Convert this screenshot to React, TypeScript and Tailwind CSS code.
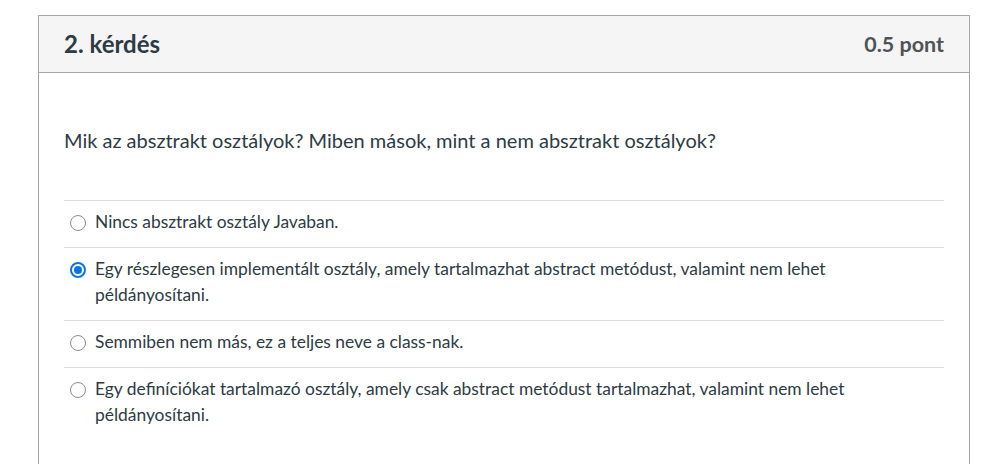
import React from "react";

const answers = [
  { text: "Nincs absztrakt osztály Javaban.", checked: false },
  {
    text: "Egy részlegesen implementált osztály, amely tartalmazhat abstract metódust, valamint nem lehet példányosítani.",
    checked: true,
  },
  { text: "Semmiben nem más, ez a teljes neve a class-nak.", checked: false },
  {
    text: "Egy definíciókat tartalmazó osztály, amely csak abstract metódust tartalmazhat, valamint nem lehet példányosítani.",
    checked: false,
  },
];

function Radio({ checked }: { checked: boolean }) {
  if (checked) {
    return (
      <span className="mt-[6px] flex h-[16px] w-[16px] shrink-0 items-center justify-center rounded-full border-2 border-[#0b74e5]">
        <span className="h-[8px] w-[8px] rounded-full bg-[#0b74e5]" />
      </span>
    );
  }
  return <span className="mt-[6px] block h-[16px] w-[16px] shrink-0 rounded-full border-[1.5px] border-[#8b8b92]" />;
}

export default function App() {
  return (
    <div className="min-h-screen bg-white pt-[15px] pl-[38px] pr-[37px] font-['Lato','Noto_Sans',sans-serif] text-[#2d3b45]">
      <div className="h-[449px] border border-b-0 border-[#a7a7a7]">
        <div className="flex h-[57px] items-center justify-between border-b border-[#a7a7a7] bg-[#f5f5f5] px-[25px]">
          <h2 className="text-[24px] font-bold">2. kérdés</h2>
          <span className="text-[21.5px] font-bold text-[#4f5357]">0.5 pont</span>
        </div>
        <div className="px-[25px] pt-[54px]">
          <p className="text-[20px] leading-[26px]">
            Mik az absztrakt osztályok? Miben mások, mint a nem absztrakt osztályok?
          </p>
          <div className="mt-[47px]">
            {answers.map((a, i) => (
              <div key={i} className="flex gap-[9px] border-t border-[#dcdcdc] pt-[8px] pb-[12px] pl-[6px] pr-[40px]">
                <Radio checked={a.checked} />
                <span className="text-[17.4px] leading-[26px]">{a.text}</span>
              </div>
            ))}
          </div>
        </div>
      </div>
    </div>
  );
}
